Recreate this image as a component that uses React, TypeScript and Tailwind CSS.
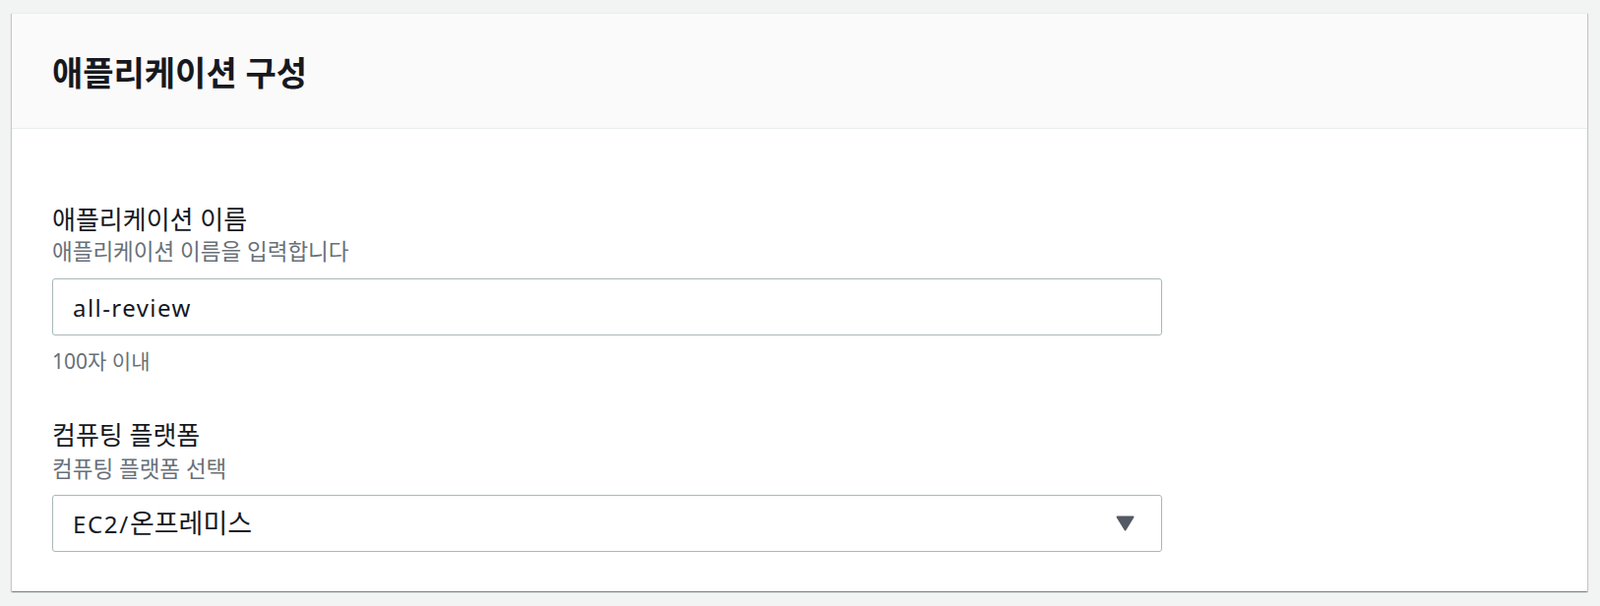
import { useState } from 'react';

const FONT = "font-['Noto_Sans','Noto_Sans_CJK_KR',sans-serif]";

function FieldLabel({ title, hint, gap }: { title: string; hint: string; gap: string }) {
  return (
    <>
      <div className="text-[26px] leading-[32px] text-[#16191f]">{title}</div>
      <div className={`${gap} text-[22.5px] leading-[28px] text-[#687078]`}>{hint}</div>
    </>
  );
}

export default function App() {
  const [name, setName] = useState('all-review');

  return (
    <div className={`${FONT} min-h-screen bg-[#f2f3f3] pt-[13px] pl-[12px] pb-[13px]`}>
      <div className="w-[1601px] border-t border-[#eaeded] bg-white shadow-[0_1px_1px_0_rgba(0,28,36,0.3),1px_1px_1px_0_rgba(0,28,36,0.15),-1px_1px_1px_0_rgba(0,28,36,0.15)]">
        <div className="flex h-[117px] items-center border-b border-[#eaeded] bg-[#fafafa] px-[41px]">
          <h2 className="mt-[3px] text-[34px] font-bold leading-[40px] text-[#16191f]">애플리케이션 구성</h2>
        </div>

        <div className="px-[41px] pt-[76px] pb-[40px]">
          <FieldLabel title="애플리케이션 이름" hint="애플리케이션 이름을 입력합니다" gap="mt-[3px]" />
          <input
            value={name}
            onChange={(e) => setName(e.target.value)}
            className="mt-[13px] block h-[58px] w-[1128px] rounded-[3px] border border-[#aab7b8] bg-white pl-[20px] text-[24px] tracking-[0.06em] text-[#16191f] outline-none"
          />
          <div className="mt-[12px] text-[21px] leading-[28px] text-[#687078]">100자 이내</div>

          <div className="mt-[45px]">
            <FieldLabel title="컴퓨팅 플랫폼" hint="컴퓨팅 플랫폼 선택" gap="mt-[5px]" />
          </div>
          <div className="mt-[12px] flex h-[58px] w-[1128px] items-center justify-between rounded-[3px] border border-[#aab7b8] bg-white pl-[20px] pr-[27px]">
            <span className="text-[24px] text-[#16191f]">
              <span className="tracking-[0.07em]">EC2/</span>
              <span className="text-[27px]">온프레미스</span>
            </span>
            <svg width="19" height="16" viewBox="0 0 19 16" aria-hidden="true">
              <polygon
                points="1.5,1.5 17.5,1.5 9.5,14.5"
                fill="#545b64"
                stroke="#545b64"
                strokeWidth="2"
                strokeLinejoin="round"
              />
            </svg>
          </div>
        </div>
      </div>
    </div>
  );
}
